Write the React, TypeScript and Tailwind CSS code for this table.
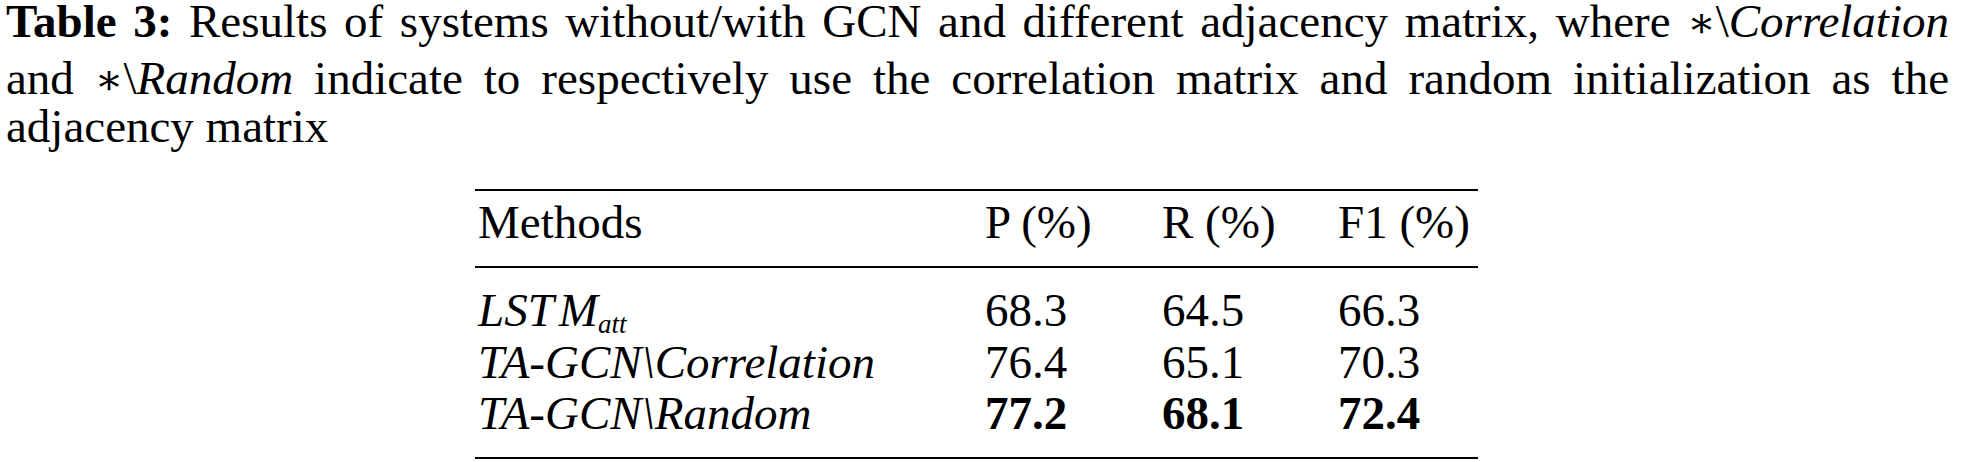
const rows = [
  { name: 'lstm', p: '68.3', r: '64.5', f1: '66.3', best: false },
  { name: 'corr', p: '76.4', r: '65.1', f1: '70.3', best: false },
  { name: 'rand', p: '77.2', r: '68.1', f1: '72.4', best: true },
];

// math asterisk, lighter than the Liberation one
const Ast = () => <span className="font-['DejaVu_Serif',serif] text-[42px] leading-none">∗</span>;

function MethodName({ id }: { id: string }) {
  if (id === 'lstm') {
    return (
      <span className="italic">
        LST<span className="ml-[5px]">M</span>
        <span className="relative top-[7px] text-[27px] leading-none">att</span>
      </span>
    );
  }
  return (
    <span className="italic">
      TA-GCN\{id === 'corr' ? 'Correlation' : 'Random'}
    </span>
  );
}

export default function App() {
  return (
    <div className="w-[1962px] h-[462px] bg-white text-black overflow-hidden font-['Liberation_Serif','Times_New_Roman',serif] text-[47px]">
      {/* Caption */}
      <div className="pl-[6px] pr-[13px]">
        <div className="leading-[42px] text-justify [text-align-last:justify]">
          <span className="font-bold">Table 3:</span> Results of systems without/with GCN and different adjacency matrix, where <Ast />\<span className="italic">Correlation</span>
        </div>
        <div className="leading-[52px] mt-[8px] text-justify [text-align-last:justify]">
          and <Ast />\<span className="italic">Random</span> indicate to respectively use the correlation matrix and random initialization as the
        </div>
        <div className="leading-[44px]">adjacency matrix</div>
      </div>

      {/* Table */}
      <div className="ml-[475px] mt-[41px] w-[1003px] border-t-2 border-b-2 border-black">
        <div className="grid grid-cols-[510px_177px_176px_140px] leading-[52px] pt-[5px] pb-[18px] border-b-2 border-black">
          <div className="pl-[3px]">Methods</div>
          <div>P (%)</div>
          <div>R (%)</div>
          <div>F1 (%)</div>
        </div>
        <div className="pt-[17px] pb-[17px]">
          {rows.map((row) => (
            <div key={row.name} className="grid grid-cols-[510px_177px_176px_140px] leading-[51.5px]">
              <div className="pl-[3px]">
                <MethodName id={row.name} />
              </div>
              <div className={row.best ? 'font-bold' : ''}>{row.p}</div>
              <div className={row.best ? 'font-bold' : ''}>{row.r}</div>
              <div className={row.best ? 'font-bold' : ''}>{row.f1}</div>
            </div>
          ))}
        </div>
      </div>
    </div>
  );
}
